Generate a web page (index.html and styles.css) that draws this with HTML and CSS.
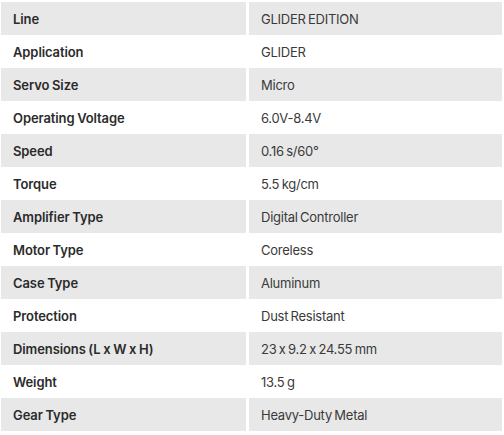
FILE: index.html
```html
<!DOCTYPE html>
<html>
<head>
<meta charset="utf-8">
<link rel="stylesheet" href="styles.css">
</head>
<body>
<div class="specs">
  <div class="row"><div class="label">Line</div><div class="value">GLIDER EDITION</div></div>
  <div class="row"><div class="label">Application</div><div class="value">GLIDER</div></div>
  <div class="row"><div class="label">Servo Size</div><div class="value">Micro</div></div>
  <div class="row"><div class="label">Operating Voltage</div><div class="value">6.0V-8.4V</div></div>
  <div class="row"><div class="label">Speed</div><div class="value">0.16 s/60°</div></div>
  <div class="row"><div class="label">Torque</div><div class="value">5.5 kg/cm</div></div>
  <div class="row"><div class="label">Amplifier Type</div><div class="value">Digital Controller</div></div>
  <div class="row"><div class="label">Motor Type</div><div class="value">Coreless</div></div>
  <div class="row"><div class="label">Case Type</div><div class="value">Aluminum</div></div>
  <div class="row"><div class="label">Protection</div><div class="value">Dust Resistant</div></div>
  <div class="row"><div class="label">Dimensions (L x W x H)</div><div class="value">23 x 9.2 x 24.55 mm</div></div>
  <div class="row"><div class="label">Weight</div><div class="value">13.5 g</div></div>
  <div class="row"><div class="label">Gear Type</div><div class="value">Heavy-Duty Metal</div></div>
</div>
</body>
</html>
```
FILE: styles.css
```css
html, body {
  margin: 0;
  padding: 0;
  background: #ffffff;
}
body {
  padding: 2px 2px 0 1px;
  font-family: Inter, "Liberation Sans", sans-serif;
  font-size: 13px;
  color: #333333;
  font-feature-settings: "calt" 0;
}
.specs {
  display: flex;
  flex-direction: column;
}
.row {
  display: grid;
  grid-template-columns: 245px 253px;
  column-gap: 3px;
  height: 33px;
}
.row:nth-child(odd) .label,
.row:nth-child(odd) .value {
  background: #e8e8e8;
}
.label, .value {
  display: flex;
  align-items: center;
}
.label {
  padding-left: 12px;
  font-weight: 600;
  color: #2b2b2b;
  letter-spacing: -0.1px;
  word-spacing: -0.5px;
}
.value {
  padding-left: 12px;
  font-weight: 400;
  color: #3a3a3a;
  letter-spacing: -0.25px;
  word-spacing: -1px;
}
```
